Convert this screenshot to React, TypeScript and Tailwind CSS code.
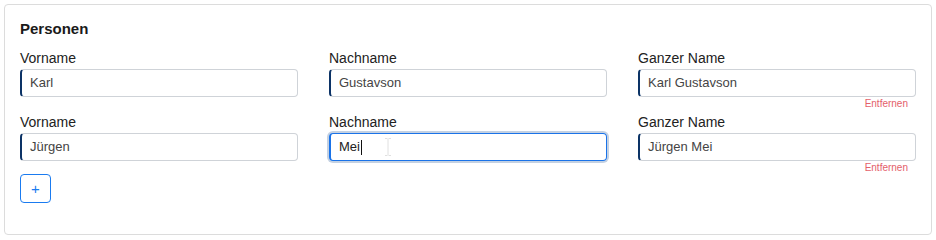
type Person = { first: string; last: string };

const people: Person[] = [
  { first: "Karl", last: "Gustavson" },
  { first: "Jürgen", last: "Mei" },
];

function Field({
  label,
  value,
  focused = false,
  caret = false,
  removable = false,
}: {
  label: string;
  value: string;
  focused?: boolean;
  caret?: boolean;
  removable?: boolean;
}) {
  return (
    <div className="flex flex-col">
      <label className="block pt-px text-[14px] leading-5 text-[#222]">{label}</label>
      <div
        className={
          focused
            ? "relative mt-px flex h-7 items-center rounded-[4px] border border-l-2 border-[#1a73e8] pl-2 text-[13px] text-[#222] shadow-[0_0_0_2px_#c4d1e2]"
            : "relative mt-px flex h-7 items-center rounded-[4px] border border-l-2 border-[#cfd3d8] border-l-[#0c3366] pl-2 text-[13px] text-[#444]"
        }
      >
        <span>{value}</span>
        {caret && <span className="ml-px inline-block h-[15px] w-px bg-[#111]" />}
        {caret && (
          <svg
            className="absolute left-[53px] top-[4px]"
            width="8"
            height="18"
            viewBox="0 0 8 18"
            fill="none"
            stroke="#e0e0e0"
            strokeWidth="1"
          >
            <path d="M1 0.5h2.5M4.5 0.5h2.5M4 1v16M1 17.5h2.5M4.5 17.5h2.5" />
          </svg>
        )}
      </div>
      <div className="h-3 pr-2 pt-px text-right text-[10px] leading-3 text-[#e4606a]">
        {removable ? "Entfernen" : ""}
      </div>
    </div>
  );
}

export default function App() {
  return (
    <div
      className="m-1 rounded-[4px] border border-[#dcdcdc] bg-white px-[15px] pb-[31px] pt-[15px]"
      style={{ fontFamily: '"Liberation Sans", Arial, sans-serif' }}
    >
      <h2 className="mb-[10px] pt-px text-[15px] font-bold leading-4 text-[#1a1a1a]">
        Personen
      </h2>
      <div className="flex flex-col gap-0.5">
        {people.map((person, index) => (
          <div key={index} className="grid grid-cols-3 gap-x-[31px]">
            <Field label="Vorname" value={person.first} />
            <Field
              label="Nachname"
              value={person.last}
              focused={index === 1}
              caret={index === 1}
            />
            <Field
              label="Ganzer Name"
              value={`${person.first} ${person.last}`}
              removable
            />
          </div>
        ))}
      </div>
      <button
        type="button"
        className="mt-px flex h-[29px] w-[31px] items-center justify-center rounded-[4px] border border-[#1a7bf0] text-[15px] leading-none text-[#1a7bf0]"
      >
        +
      </button>
    </div>
  );
}
